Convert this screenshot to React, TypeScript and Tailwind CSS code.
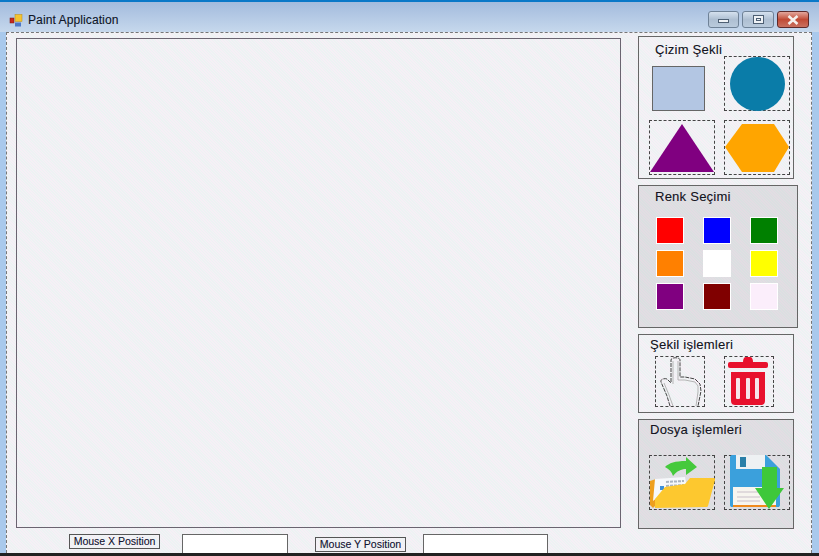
import type { ReactNode } from 'react'

const dither = 'bg-[repeating-linear-gradient(45deg,#f6eff6_0,#f6eff6_1px,#ecf3f3_1px,#ecf3f3_2px)]'
const ditherGrey = 'bg-[repeating-linear-gradient(45deg,#e3dce3_0,#e3dce3_1px,#dae0e1_1px,#dae0e1_2px)]'
const fuzzy = '[text-shadow:0.3px_0_0_rgba(20,30,90,0.3)]'

function ShapeBox({ className, children }: { className: string; children: ReactNode }) {
  return <div className={`border border-dashed border-[#444] ${className}`}>{children}</div>
}

function PanelTitle({ className, children }: { className: string; children: ReactNode }) {
  return <div className={`text-[13px] leading-[15px] tracking-[0.25px] text-[#151520] ${fuzzy} ${className}`}>{children}</div>
}

function WindowButtons() {
  return (
    <div className="flex gap-[3px]">
      <div className="flex h-[17px] w-[31px] items-center justify-center rounded-[3px] border border-[#6f8297] bg-gradient-to-b from-[#d5e1ee] via-[#aebfd2] to-[#b9cadc]">
        <div className="mt-[3px] h-[4px] w-[11px] border border-[#4d5f73] bg-[#eef2f6]" />
      </div>
      <div className="flex h-[17px] w-[32px] items-center justify-center rounded-[3px] border border-[#6f8297] bg-gradient-to-b from-[#d5e1ee] via-[#aebfd2] to-[#b9cadc]">
        <div className="flex h-[9px] w-[11px] items-center justify-center border border-[#4d5f73] bg-[#eef2f6]">
          <div className="h-[3px] w-[5px] border border-[#4d5f73]" />
        </div>
      </div>
      <div className="flex h-[17px] w-[32px] items-center justify-center rounded-[3px] border border-[#5e2a2a] bg-gradient-to-b from-[#e2a69c] via-[#c04a35] to-[#c9705f]">
        <svg width="12" height="10" viewBox="0 0 12 10">
          <path d="M1.5 1 L10.5 9 M10.5 1 L1.5 9" stroke="#f5f1ee" strokeWidth="2.6" />
        </svg>
      </div>
    </div>
  )
}

function AppIcon() {
  return (
    <svg width="14" height="13" viewBox="0 0 14 13" className="shrink-0">
      <rect x="1" y="4" width="4" height="5" fill="#c8281e" stroke="#7a1a14" strokeWidth="0.5" />
      <rect x="6" y="0.5" width="7" height="7" fill="#f4c430" stroke="#b98a1a" strokeWidth="0.5" />
      <rect x="6" y="8.5" width="6" height="4" fill="#4d78c8" />
    </svg>
  )
}

function HandIcon() {
  return (
    <svg width="50" height="51" viewBox="0 0 50 51" className="-m-px">
      <path
        d="M16 26 L16 4 C16 1 25 1 25 4 L25 21 L30 21 L35 22 L40 23 L45 28 L46 35 L43 50 M15 50 L12 40 L6 26 C5 23 10 22 12 23 L16 27"
        fill="none"
        stroke="#444"
        strokeWidth="1"
        strokeDasharray="4 1"
      />
      <path
        d="M18 28 L18 5 M23 5 L23 24 L30 24 L35 25 L40 26 L43 30 L43 36 L41 50 M18 50 L14 39 L9 27"
        fill="none"
        stroke="#b5b5b5"
        strokeWidth="1"
      />
    </svg>
  )
}

function TrashIcon() {
  return (
    <svg width="50" height="51" viewBox="0 0 50 51" className="-m-px">
      <path d="M19 6 C19 3 20 1 22 1 L26 1 C28 1 29 3 29 6 Z" fill="#e8112d" />
      <rect x="4" y="6" width="40" height="6" rx="2" fill="#e8112d" />
      <path d="M7 16 L41 16 L41 45 C41 48 39 49 37 49 L11 49 C9 49 7 48 7 45 Z" fill="#e8112d" />
      <rect x="12" y="22" width="4" height="21" rx="1" fill="#f6e6ea" />
      <rect x="22" y="22" width="4" height="21" rx="1" fill="#f6e6ea" />
      <rect x="31" y="22" width="4" height="21" rx="1" fill="#f6e6ea" />
    </svg>
  )
}

function FolderIcon() {
  return (
    <svg width="66" height="55" viewBox="0 0 66 55" className="-m-px">
      <path d="M1 26 L7 24 L7 50 L4 53 L1 50 Z" fill="#ee9f1e" />
      <path d="M4 46 L6 24 L36 22 L38 32 L14 38 Z" fill="#f6f8fb" />
      <rect x="11" y="31" width="4" height="4" fill="#3d8fd8" />
      <path d="M17 27 L35 26 M17 31 L35 30" stroke="#a9b4c2" strokeWidth="2" strokeDasharray="3 1" />
      <path d="M6 53 L6 44 L16 32 L36 29 L41 23 L65 23 C66 23 66 24 66 25 L59 51 C58.5 52 58 52 56 52 Z" fill="#fdc82f" />
      <path
        d="M16 12 C20 8 26 6 37 6 L37 2 L48 12 L37 20 L37 14 C32 14 28 16 24 21 C23 17 20 14 16 12 Z"
        fill="#45c93c"
      />
    </svg>
  )
}

function FloppyIcon() {
  return (
    <svg width="66" height="55" viewBox="0 0 66 55" className="-m-px">
      <path d="M8 0 L42 0 L56 14 L56 50 C56 51.5 55 52 54 52 L8 52 C7 52 6 51.5 6 50 L6 2 C6 1 7 0 8 0 Z" fill="#3ba0dc" />
      <rect x="12" y="0" width="29" height="14" fill="#eef1f3" />
      <rect x="16" y="2" width="6" height="10" fill="#2a7fa8" />
      <rect x="9" y="32" width="43" height="18" fill="#f7f5ef" />
      <rect x="9" y="50" width="43" height="2" fill="#f08a1d" />
      <path d="M13 37 L36 37 M13 42 L36 42 M13 46 L36 46" stroke="#c9bfc9" strokeWidth="1" />
      <path d="M38 12 L53 12 L53 33 L60 33 L45 54 L31 33 L38 33 Z" fill="#3ec83a" />
    </svg>
  )
}

function Swatch({ color }: { color: string }) {
  return <div className={`h-[27px] w-[28px] border border-white ${color}`} />
}

export default function App() {
  return (
    <div className="flex h-[556px] w-[819px] flex-col overflow-hidden bg-[#a9c9ec] font-['Liberation_Sans',Arial,sans-serif] text-[#111]">
      <div className="h-[2px] shrink-0 bg-[#0a78c8]" />

      {/* Title bar */}
      <div className="flex h-[30px] shrink-0 items-start justify-between bg-gradient-to-b from-[#a3bbdd] to-[#c6d8ec] pl-[9px] pr-[10px]">
        <div className="mt-[11px] flex items-center gap-[5px]">
          <AppIcon />
          <span className={`text-[12px] leading-[14px] tracking-[0.1px] text-[#111827] ${fuzzy}`}>Paint Application</span>
        </div>
        <div className="mt-[9px]">
          <WindowButtons />
        </div>
      </div>

      {/* Form body */}
      <div className={`ml-[6px] mr-[7px] min-h-0 flex-1 border border-b-0 border-dashed border-[#777] ${dither}`}>
        <div className="flex gap-[17px] pl-[9px] pt-[5px]">
          <div className="h-[490px] w-[605px] border border-[#6a6470]" />

          <div className="-mt-[2px] flex w-[160px] flex-col gap-[6px]">
            <section className="h-[143px] w-[156px] border border-[#666]">
              <PanelTitle className="pl-[16px] pt-[5px]">Çizim Şekli</PanelTitle>
              <div className="-mt-px flex items-start pl-[10px]">
                <div className="ml-[3px] mt-[10px] h-[45px] w-[53px] border border-[#666] bg-[#b3c6e3]" />
                <ShapeBox className="ml-[19px] h-[55px] w-[66px]">
                  <div className="mx-auto h-[54px] w-[55px] rounded-full bg-[#0a7ca8]" />
                </ShapeBox>
              </div>
              <div className="mt-[9px] flex pl-[10px]">
                <ShapeBox className="h-[55px] w-[66px]">
                  <svg width="64" height="53" viewBox="0 0 64 53">
                    <path d="M32 3 L64 51 L0 51 Z" fill="#800080" />
                  </svg>
                </ShapeBox>
                <ShapeBox className="ml-[9px] h-[55px] w-[66px]">
                  <svg width="64" height="53" viewBox="0 0 64 53">
                    <path d="M0 26 L17 3 L49 3 L64 26 L49 51 L17 51 Z" fill="#ffa500" />
                  </svg>
                </ShapeBox>
              </div>
            </section>

            <section className={`h-[143px] w-[160px] border border-[#666] ${ditherGrey}`}>
              <PanelTitle className="pl-[16px] pt-[3px]">Renk Seçimi</PanelTitle>
              <div className="mt-[13px] grid w-[140px] grid-cols-[28px_28px_28px] gap-x-[19px] gap-y-[6px] pl-[17px]">
                <Swatch color="bg-[#ff0000]" />
                <Swatch color="bg-[#0000ff]" />
                <Swatch color="bg-[#008000]" />
                <Swatch color="bg-[#ff8000]" />
                <Swatch color="bg-white" />
                <Swatch color="bg-[#ffff00]" />
                <Swatch color="bg-[#800080]" />
                <Swatch color="bg-[#800000]" />
                <Swatch color="bg-[#fbeefb]" />
              </div>
            </section>

            <section className="h-[79px] w-[156px] border border-[#666]">
              <PanelTitle className="pl-[11px] pt-[2px]">Şekil işlemleri</PanelTitle>
              <div className="mt-[4px] flex gap-[19px] pl-[16px]">
                <ShapeBox className="h-[51px] w-[50px]">
                  <HandIcon />
                </ShapeBox>
                <ShapeBox className="h-[51px] w-[50px]">
                  <TrashIcon />
                </ShapeBox>
              </div>
            </section>

            <section className={`h-[110px] w-[156px] border border-[#666] ${ditherGrey}`}>
              <PanelTitle className="pl-[11px] pt-[2px]">Dosya işlemleri</PanelTitle>
              <div className="mt-[18px] flex gap-[9px] pl-[10px]">
                <ShapeBox className="h-[55px] w-[66px]">
                  <FolderIcon />
                </ShapeBox>
                <ShapeBox className="h-[55px] w-[66px]">
                  <FloppyIcon />
                </ShapeBox>
              </div>
            </section>
          </div>
        </div>

        {/* Mouse position row */}
        <div className="mt-[5px] flex items-start pl-[62px]">
          <div className={`h-[15px] w-[91px] border border-[#555] text-center text-[10.5px] leading-[13px] text-[#151530] ${fuzzy}`}>Mouse X Position</div>
          <div className="ml-[22px] h-[19px] w-[106px] border border-b-0 border-[#666] bg-white" />
          <div className={`ml-[27px] mt-[3px] h-[15px] w-[91px] border border-[#555] text-center text-[10.5px] leading-[13px] text-[#151530] ${fuzzy}`}>Mouse Y Position</div>
          <div className="ml-[17px] h-[19px] w-[125px] border border-b-0 border-[#666] bg-white" />
        </div>
      </div>

      <div className="h-[3px] shrink-0 bg-[#222]" />
    </div>
  )
}
